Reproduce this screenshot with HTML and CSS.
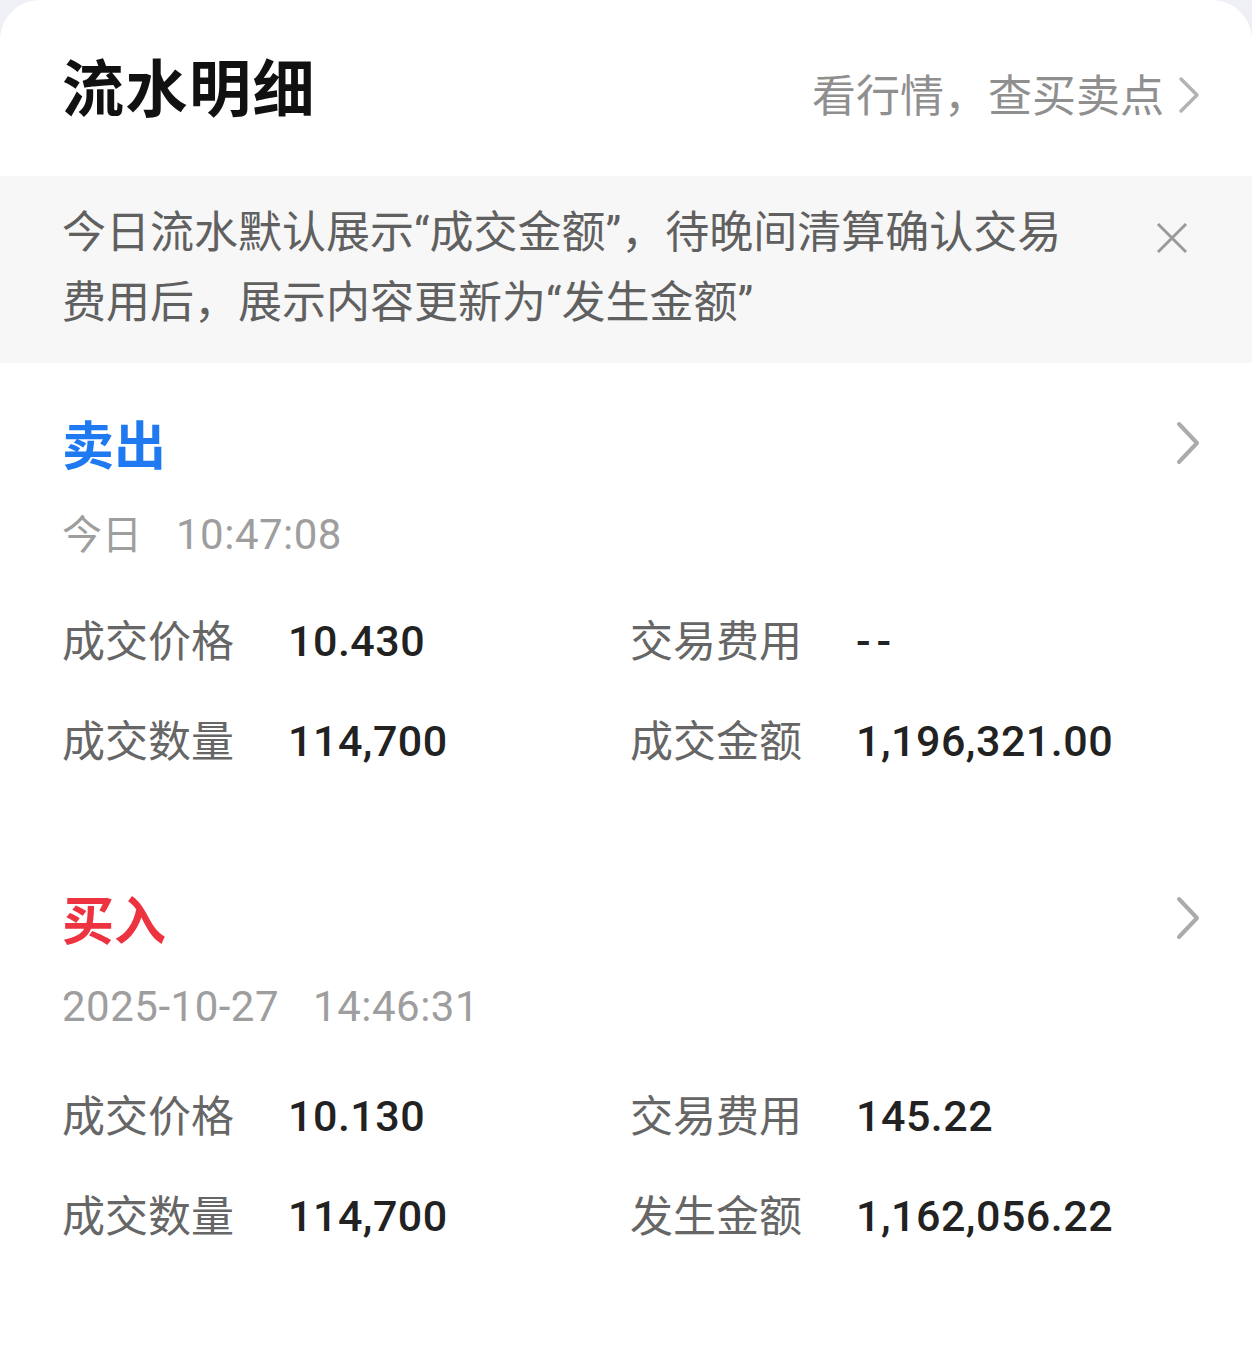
FILE: index.html
```html
<!DOCTYPE html>
<html lang="zh-CN">
<head>
  <meta charset="UTF-8">
  <meta name="viewport" content="width=device-width, initial-scale=1.0">
  <title>流水明细</title>
  <link rel="stylesheet" href="styles.css">
</head>
<body>
  <div class="sheet">
    <div class="header">
      <h1 class="title">流水明细</h1>
      <a class="quote-link" href="#">
        看行情，查买卖点
        <svg class="chev-small" viewBox="0 0 22 38" width="22" height="38"><path d="M3 3 L19 19 L3 35" fill="none" stroke="#b3b3b3" stroke-width="3.5" stroke-linecap="round" stroke-linejoin="round"/></svg>
      </a>
    </div>

    <div class="notice">
      <p class="notice-text">今日流水默认展示“成交金额”，待晚间清算确认交易费用后，展示内容更新为“发生金额”</p>
      <svg class="close" viewBox="0 0 32 32" width="32" height="32"><path d="M2 2 L30 30 M30 2 L2 30" fill="none" stroke="#9a9a9a" stroke-width="3"/></svg>
    </div>

    <!-- 卖出 -->
    <div class="trade">
      <div class="trade-head">
        <span class="trade-type sell">卖出</span>
        <svg class="chev" viewBox="0 0 24 44" width="24" height="44"><path d="M3 3 L21 22 L3 41" fill="none" stroke="#ababab" stroke-width="4" stroke-linecap="round" stroke-linejoin="round"/></svg>
      </div>
      <div class="trade-time"><span class="cn">今日</span><span class="gap"></span>10:47:08</div>
      <div class="trade-grid">
        <div class="field"><span class="label">成交价格</span><span class="value">10.430</span></div>
        <div class="field"><span class="label">交易费用</span><span class="value dash">--</span></div>
        <div class="field"><span class="label">成交数量</span><span class="value">114,700</span></div>
        <div class="field"><span class="label">成交金额</span><span class="value">1,196,321.00</span></div>
      </div>
    </div>

    <!-- 买入 -->
    <div class="trade">
      <div class="trade-head">
        <span class="trade-type buy">买入</span>
        <svg class="chev" viewBox="0 0 24 44" width="24" height="44"><path d="M3 3 L21 22 L3 41" fill="none" stroke="#ababab" stroke-width="4" stroke-linecap="round" stroke-linejoin="round"/></svg>
      </div>
      <div class="trade-time">2025-10-27<span class="gap"></span>14:46:31</div>
      <div class="trade-grid">
        <div class="field"><span class="label">成交价格</span><span class="value">10.130</span></div>
        <div class="field"><span class="label">交易费用</span><span class="value">145.22</span></div>
        <div class="field"><span class="label">成交数量</span><span class="value">114,700</span></div>
        <div class="field"><span class="label">发生金额</span><span class="value">1,162,056.22</span></div>
      </div>
    </div>
  </div>
</body>
</html>
```

FILE: styles.css
```css
body {
  margin: 0;
  background-color: #eef0f5;
  font-family: "Noto Sans CJK SC", "Noto Sans", sans-serif;
}
.sheet {
  background: #fff;
  border-radius: 40px 40px 0 0;
  min-height: 1350px;
}
.header {
  height: 176px;
  display: flex;
  align-items: center;
  justify-content: space-between;
  padding: 0 52px 0 62px;
}
.title {
  margin: 0;
  font-size: 62px;
  font-weight: 700;
  color: #111;
  letter-spacing: 1.5px;
  margin-top: -6px;
}
.quote-link {
  display: flex;
  align-items: center;
  gap: 14px;
  font-size: 44px;
  color: #8f8f8f;
  text-decoration: none;
  margin-top: 10px;
}
.chev-small {
  margin-top: 4px;
}
.notice {
  background: #f7f7f7;
  height: 187px;
  box-sizing: border-box;
  padding: 22px 64px 0 62px;
  display: flex;
  justify-content: space-between;
  align-items: flex-start;
}
.notice-text {
  margin: 0;
  width: 1012px;
  font-family: Roboto, "Noto Sans CJK SC", sans-serif;
  font-size: 44px;
  line-height: 70px;
  color: #606060;
}
.close {
  margin-top: 24px;
}
.trade {
  padding: 50px 52px 47px 62px;
}
.trade-head {
  display: flex;
  justify-content: space-between;
  align-items: center;
  height: 60px;
}
.trade-type {
  font-size: 52px;
  font-weight: 700;
  line-height: 60px;
}
.sell {
  color: #1f7af2;
}
.buy {
  color: #ee3340;
}
.trade-time {
  margin-top: 34px;
  height: 50px;
  line-height: 50px;
  font-family: Roboto, "Noto Sans CJK SC", sans-serif;
  font-size: 42px;
  letter-spacing: 0.5px;
  color: #9e9e9e;
}
.trade-time .cn {
  font-family: "Noto Sans CJK SC", sans-serif;
  font-size: 40px;
  letter-spacing: 0;
}
.gap {
  display: inline-block;
  width: 34px;
}
.trade-grid {
  margin-top: 34px;
  display: grid;
  grid-template-columns: 568px 1fr;
}
.field {
  display: flex;
  align-items: center;
  height: 100px;
}
.label {
  width: 226px;
  font-size: 43px;
  color: #666;
  margin-top: -6px;
}
.value {
  font-family: Roboto, sans-serif;
  font-weight: 500;
  font-size: 43px;
  color: #222;
  letter-spacing: 0.5px;
}
.dash {
  letter-spacing: 6px;
}
```
